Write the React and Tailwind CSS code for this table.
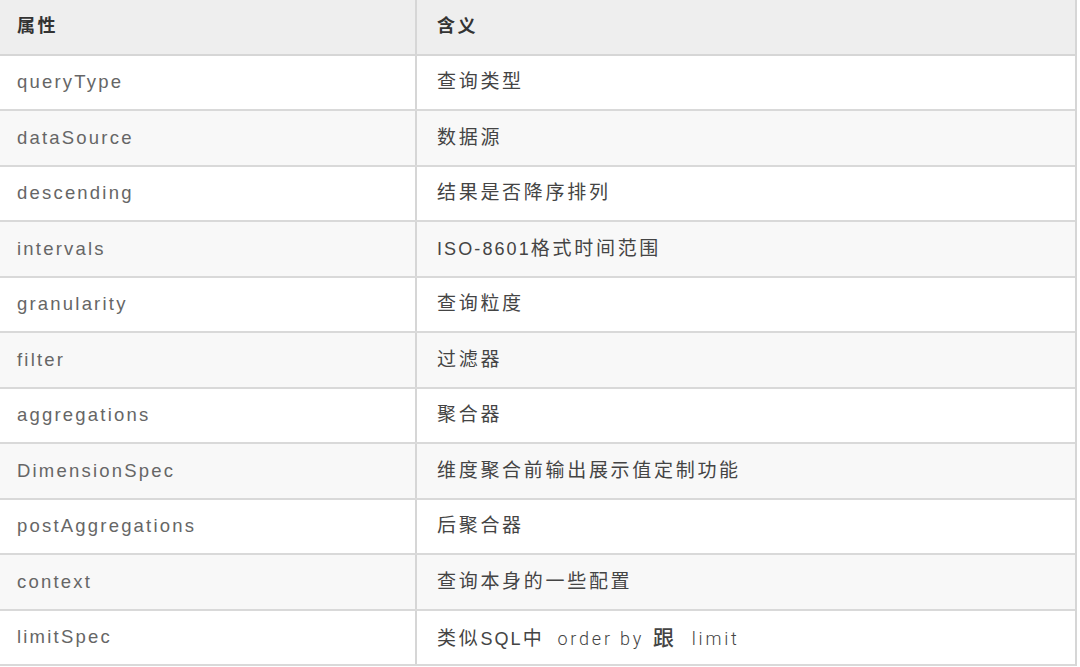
import React from "react";

const Latin = ({ children }) => (
  <span className="text-[18px] tracking-[2.1px]">{children}</span>
);

const Thin = ({ children, className = "" }) => (
  <span className={`font-['Roboto'] font-light text-[18px] tracking-[2.8px] ${className}`}>
    {children}
  </span>
);

const rows = [
  ["queryType", "查询类型"],
  ["dataSource", "数据源"],
  ["descending", "结果是否降序排列"],
  ["intervals", <><Latin>ISO-8601</Latin>格式时间范围</>],
  ["granularity", "查询粒度"],
  ["filter", "过滤器"],
  ["aggregations", "聚合器"],
  ["DimensionSpec", "维度聚合前输出展示值定制功能"],
  ["postAggregations", "后聚合器"],
  ["context", "查询本身的一些配置"],
  [
    "limitSpec",
    <>
      类似<Latin>SQL</Latin>中
      <Thin className="ml-[13px] mr-[9px]">order by</Thin>
      <span className="text-[21px] font-medium">跟</span>
      <Thin className="ml-[15px]">limit</Thin>
    </>,
  ],
];

const font = {
  fontFamily: '"Liberation Sans", "Noto Sans CJK SC", sans-serif',
};

export default function App() {
  return (
    <div className="w-[1080px] h-[667px] bg-white overflow-hidden" style={font}>
      <div className="w-[1077px] border-r-2 border-[#d6d6d6]">
        {/* Header */}
        <div className="flex h-[55.5px] bg-[#eeeeee] border-b-2 border-[#d6d6d6] text-[18px] font-bold text-[#333] tracking-[2.5px]">
          <div className="w-[417px] shrink-0 flex items-center pl-[17px] border-r-2 border-[#d6d6d6]">
            属性
          </div>
          <div className="flex-1 flex items-center pl-[20px]">含义</div>
        </div>

        {/* Rows */}
        {rows.map(([name, desc], i) => (
          <div
            key={name}
            className={`flex h-[55.5px] border-b-2 border-[#d9d9d9] ${
              i % 2 === 1 ? "bg-[#f8f8f8]" : "bg-white"
            }`}
          >
            <div className="w-[417px] shrink-0 flex items-center pl-[17px] border-r-2 border-[#d6d6d6] text-[18.5px] text-[#666] tracking-[2.2px]">
              {name}
            </div>
            <div className="flex-1 flex items-center pl-[20px] text-[19px] text-[#444] tracking-[2.7px]">
              <span>{desc}</span>
            </div>
          </div>
        ))}
      </div>
    </div>
  );
}
